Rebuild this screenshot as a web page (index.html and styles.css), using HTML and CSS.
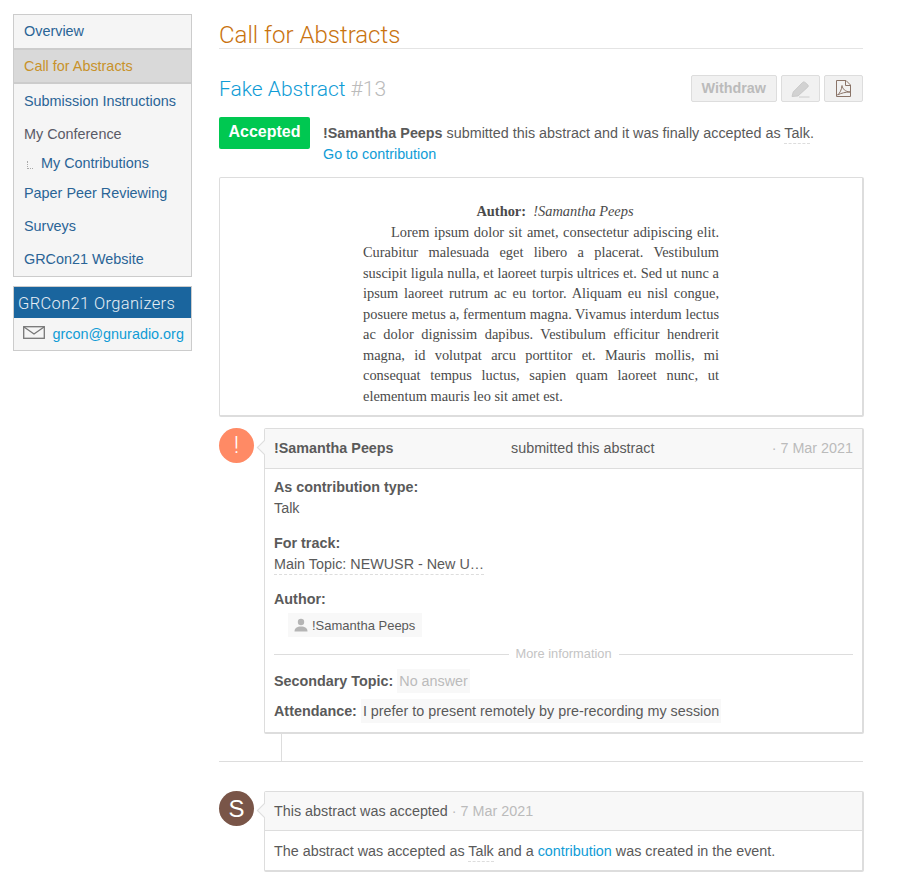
FILE: index.html
```html
<!DOCTYPE html>
<html lang="en">
<head>
    <meta charset="UTF-8">
    <meta name="viewport" content="width=device-width, initial-scale=1.0">
    <title>Call for Abstracts</title>
    <link rel="stylesheet" href="styles.css">
</head>
<body>
<div class="page">

    <!-- Left menu -->
    <aside class="sidebar">
        <nav class="menu">
            <a class="menu-item first">Overview</a>
            <a class="menu-item active">Call for Abstracts</a>
            <a class="menu-item after-active">Submission Instructions</a>
            <span class="menu-item plain">My Conference</span>
            <a class="menu-item sub"><span class="sub-mark"></span>My Contributions</a>
            <a class="menu-item peer">Paper Peer Reviewing</a>
            <a class="menu-item">Surveys</a>
            <a class="menu-item last">GRCon21 Website</a>
        </nav>
        <div class="support">
            <div class="support-title">GRCon21 Organizers</div>
            <div class="support-row">
                <svg class="mail-icon" width="22" height="13" viewBox="0 0 22 13" fill="none" stroke="#777" stroke-width="1.3">
                    <rect x="0.7" y="0.7" width="20.6" height="11.6"/>
                    <path d="M1 1l10 7 10-7"/>
                </svg>
                <a class="link">grcon@gnuradio.org</a>
            </div>
        </div>
    </aside>

    <!-- Right main content -->
    <main class="content">
        <h1 class="page-title">Call for Abstracts</h1>

        <div class="abstract-head">
            <h2 class="abstract-title">Fake Abstract <span class="abstract-id">#13</span></h2>
            <div class="toolbar">
                <span class="btn">Withdraw</span>
                <span class="btn icon-btn">
                    <svg class="pencil-icon" width="19" height="17" viewBox="0 0 19 17" fill="#d2d2d2" stroke="#c4c4c4" stroke-width="0.8">
                        <path d="M1 15.500l1.200-4.500L11.500 1.500c.8-.8 1.700-.8 2.500-.1l2.700 2.300c.8.8.8 1.700 0 2.500L7 15z"/>
                        <path d="M8 16h10.500"/>
                    </svg>
                </span>
                <span class="btn icon-btn">
                    <svg width="15" height="17" viewBox="0 0 15 17" fill="none" stroke="#8a7468" stroke-width="1">
                        <path d="M.5.500h9.500l4.500 4.500v11.500H.500z"/>
                        <path d="M9.500.500v5h5"/>
                        <path d="M1.500 15c2.500-2 4-5 4.500-9.500.6 3.500 3 6 8 6.500-4.500 0-8.500 1-12.500 3z"/>
                    </svg>
                </span>
            </div>
        </div>

        <div class="status-row">
            <div class="status-badge">Accepted</div>
            <div class="status-text">
                <strong>!Samantha Peeps</strong> submitted this abstract and it was finally accepted as <span class="dotted">Talk</span>.<br>
                <a class="link">Go to contribution</a>
            </div>
        </div>

        <div class="abstract-box">
            <div class="abstract-body">
                <p class="abstract-author"><strong>Author:</strong>&nbsp; <em>!Samantha Peeps</em></p>
                <p class="abstract-text">Lorem ipsum dolor sit amet, consectetur adipiscing elit. Curabitur malesuada eget libero a placerat. Vestibulum suscipit ligula nulla, et laoreet turpis ultrices et. Sed ut nunc a ipsum laoreet rutrum ac eu tortor. Aliquam eu nisl congue, posuere metus a, fermentum magna. Vivamus interdum lectus ac dolor dignissim dapibus. Vestibulum efficitur hendrerit magna, id volutpat arcu porttitor et. Mauris mollis, mi consequat tempus luctus, sapien quam laoreet nunc, ut elementum mauris leo sit amet est.</p>
            </div>
        </div>

        <!-- Timeline -->
        <div class="event">
            <div class="avatar warn">!</div>
            <div class="card">
                <div class="card-head">
                    <strong class="head-name">!Samantha Peeps</strong>
                    <span class="head-action">submitted this abstract</span>
                    <span class="muted">· 7 Mar 2021</span>
                </div>
                <div class="card-body">
                    <div class="field">
                        <strong>As contribution type:</strong>
                        <div>Talk</div>
                    </div>
                    <div class="field">
                        <strong>For track:</strong>
                        <div><span class="dotted-wide">Main Topic: NEWUSR - New U…</span></div>
                    </div>
                    <div class="field">
                        <strong>Author:</strong>
                        <div>
                            <span class="author-chip">
                                <svg width="14" height="14" viewBox="0 0 14 14" fill="#b5b5b5">
                                    <circle cx="7" cy="4" r="3.200"/>
                                    <path d="M.5 13.500c0-3.500 2.500-5 6.500-5s6.500 1.500 6.500 5z"/>
                                </svg>
                                !Samantha Peeps
                            </span>
                        </div>
                    </div>
                    <div class="separator">More information</div>
                    <div class="answer answer-first"><strong>Secondary Topic:</strong> <span class="answer-value empty">No answer</span></div>
                    <div class="answer"><strong>Attendance:</strong> <span class="answer-value">I prefer to present remotely by pre-recording my session</span></div>
                </div>
            </div>
        </div>
        <div class="connector"></div>

        <div class="event event-second">
            <div class="avatar brown">S</div>
            <div class="card">
                <div class="card-head simple">This abstract was accepted <span class="muted">· 7 Mar 2021</span></div>
                <div class="card-body simple">The abstract was accepted as <span class="dotted">Talk</span> and a <a class="link">contribution</a> was created in the event.</div>
            </div>
        </div>
    </main>

</div>
</body>
</html>
```

FILE: styles.css
```css
* { box-sizing: border-box; }
body { margin: 0; background: #fff; color: #5a5a5a; font-family: "Liberation Sans", Arial, sans-serif; font-size: 14.35px; line-height: 21px; overflow: hidden; }
.page { display: flex; align-items: flex-start; padding: 14px 37px 0 13px; height: 887px; overflow: hidden; }
.link { color: #109cd6; text-decoration: none; }
strong { font-weight: bold; }

/* sidebar */
.sidebar { width: 179px; flex: none; margin-right: 27px; font-size: 14.4px; }
.menu { display: flex; flex-direction: column; background: #f5f5f5; border: 1px solid #ccc; height: 263px; }
.menu-item { display: block; height: 33px; line-height: 33px; padding-left: 10px; color: #2a6496; white-space: nowrap; }
.menu-item.first { line-height: 32px; }
.menu-item.active { height: 36px; line-height: 32px; background: #d9d9d9; color: #c8922a; border-top: 2px solid #ccc; border-bottom: 2px solid #ccc; }
.menu-item.after-active { height: 34px; line-height: 34px; }
.menu-item.plain { color: #5a5a66; }
.menu-item.sub { height: 25px; line-height: 25px; padding-left: 13px; display: flex; align-items: center; }
.menu-item.peer { height: 34px; line-height: 34px; }
.sub-mark { width: 6px; height: 8px; margin-right: 8px; margin-top: 2px; border-left: 1px dotted #aaa; border-bottom: 1px dotted #aaa; }
.support { margin-top: 9px; border: 1px solid #ccc; background: #f5f5f5; height: 65px; }
.support-title { background: #1a659e; color: #e6eef5; font-family: Roboto, sans-serif; font-weight: 300; font-size: 16.5px; height: 31px; line-height: 33px; padding-left: 4px; letter-spacing: 0.35px; white-space: nowrap; overflow: hidden; }
.support-row { display: flex; align-items: center; padding: 1px 0 0 9px; height: 32px; }
.mail-icon { margin-right: 7.500px; margin-top: -5px; flex: none; }

/* main column */
.content { flex: 1; min-width: 0; }
.page-title { margin: 0; height: 35px; border-bottom: 1px solid #e4e4e4; color: #c9730f; font-family: Roboto, sans-serif; font-weight: 300; font-size: 24px; line-height: 43px; white-space: nowrap; }
.abstract-head { display: flex; justify-content: space-between; align-items: flex-start; margin-top: 26px; height: 42px; }
.abstract-title { margin: 0; color: #109cd6; font-family: Roboto, sans-serif; font-weight: 300; font-size: 21px; line-height: 28px; }
.abstract-id { color: #bbb; }
.toolbar { display: flex; gap: 4px; }
.btn { height: 27px; line-height: 25px; padding: 0 10px; border: 1px solid #ddd; border-radius: 2px; background: #f1f1f1; color: #bbb; font-weight: bold; }
.icon-btn { width: 39px; padding: 0; display: flex; align-items: center; justify-content: center; }
.pencil-icon { margin-top: 2px; }
.status-row { display: flex; align-items: flex-start; }
.status-badge { width: 91px; height: 32px; margin-right: 13px; background: #00c851; border-radius: 2px; color: #fff; font-weight: bold; font-size: 16px; line-height: 30px; text-align: center; }
.status-text { flex: 1; padding-top: 6px; }
.dotted { border-bottom: 1px dashed #ddd; padding-bottom: 2px; }
.abstract-box { margin-top: 12px; margin-right: -1px; height: 240px; padding: 23px 0 0 143px; border: 1px solid #ddd; border-right-width: 2px; border-bottom-width: 2px; border-radius: 2px; }
.abstract-body { width: 356px; font-family: "Liberation Serif", "Times New Roman", serif; font-size: 14.4px; line-height: 20.500px; color: #4a4a4a; }
.abstract-author { margin: 0; padding-left: 28px; text-align: center; }
.abstract-text { margin: 0; text-align: justify; text-indent: 28px; }

/* timeline */
.event { position: relative; display: flex; margin-top: 11px; }
.avatar { width: 35px; height: 35px; flex: none; margin-right: 10px; border-radius: 50%; color: #fff; font-size: 24px; line-height: 35px; text-align: center; }
.avatar.warn { background: #ff8a65; font-family: Roboto, sans-serif; font-weight: 300; }
.avatar.brown { background: #795548; }
.card { position: relative; flex: 1; min-width: 0; margin-right: -1px; border: 1px solid #ddd; border-right-width: 2px; border-bottom-width: 2px; border-radius: 2px; }
.card::before { content: ""; position: absolute; top: 13px; left: -6px; width: 10px; height: 10px; transform: rotate(45deg); background: #f8f8f8; border-left: 1px solid #ddd; border-bottom: 1px solid #ddd; }
.card-head { position: relative; display: flex; align-items: center; height: 40px; padding: 0 9px; background: #f8f8f8; border-bottom: 1px solid #ddd; }
.head-name { flex: 0 0 237px; }
.head-action { flex: 1; }
.muted { color: #bbb; }
.card-head.simple { display: block; height: 39px; line-height: 38px; }
.card-body { padding: 8px 9px 0; height: 263px; }
.card-body.simple { height: 39px; line-height: 40px; padding-top: 0; }
.field { margin-bottom: 14px; }
.dotted-wide { display: inline-block; border-bottom: 1px dashed #ddd; line-height: 20px; }
.author-chip { display: inline-flex; align-items: center; gap: 4px; margin-left: 14px; margin-top: 3px; height: 24px; padding: 0 7px 0 6px; background: #f8f8f8; font-size: 13px; }
.separator { display: flex; align-items: center; gap: 7px; margin-top: -7px; color: #c4c4c4; font-size: 12.8px; line-height: 18px; }
.separator::before, .separator::after { content: ""; flex: 1; height: 1px; background: #ddd; }
.answer { margin-top: 6px; line-height: 24px; white-space: nowrap; }
.answer-value { display: inline-block; padding: 0 2px; background: #f8f8f8; }
.answer-value.empty { color: #bbb; }
.connector { width: 1px; height: 27px; margin-left: 62px; background: #ddd; }
.event-second { margin-top: 0; padding-top: 29px; border-top: 1px solid #ddd; }
```
